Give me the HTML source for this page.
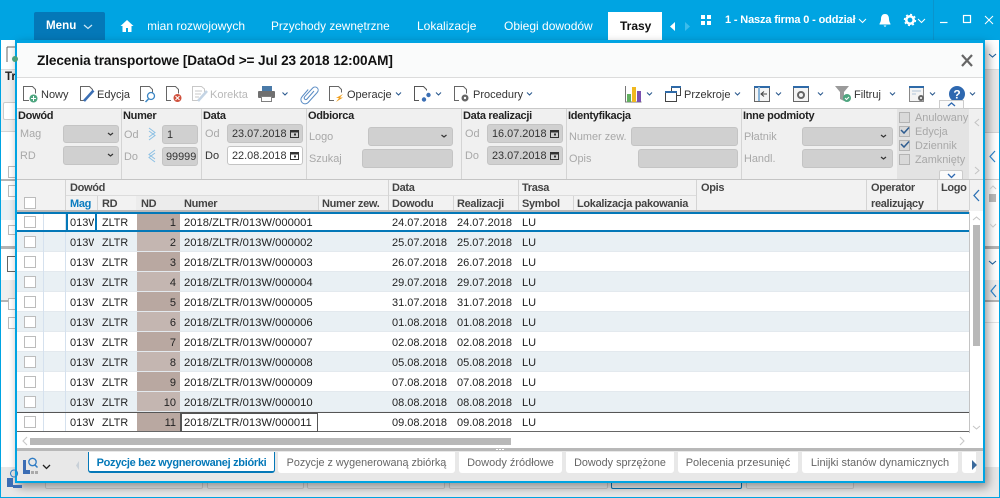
<!DOCTYPE html>
<html><head><meta charset="utf-8">
<style>
html,body{margin:0;padding:0;width:1000px;height:498px;overflow:hidden;background:#fff}
body{position:relative;font-family:"Liberation Sans",sans-serif;font-size:11px;color:#222}
div,span.t{position:absolute;white-space:nowrap;box-sizing:border-box}
.r{left:17px;width:952px;height:20px;background:#fff;border-bottom:1px solid #e3e9ee}
.r.a{background:#e9f0f4}
.r div{top:4px;line-height:14px;color:#222;font-size:11px}
.r .cb{left:7px;top:4px;width:12px;height:12px;border:1px solid #bcbcbc;background:#fff}
.r .v1{left:26px;top:0;width:1px;height:20px;background:#d5e1ee}
.r .v2{left:48px;top:0;width:1px;height:20px;background:#d5e1ee}
.r .m{left:53px;width:24px;overflow:hidden}
.r .d{left:85px;font-size:10.8px}
.r .n{left:120px;top:0;width:43px;height:19px;background:#b9a8a1;text-align:right;padding:4px 4px 0 0}
.r.a .n{background:#c4b6b1}
.r .u{left:167px;font-size:11.25px}.r .x{left:375px}.r .y{left:440px}.r .s{left:505px}
.lb{font-weight:bold;color:#222;top:109px;line-height:14px;font-size:11px;letter-spacing:-.3px}
.g{color:#a8a8a8;line-height:14px;font-size:10.9px}
.f{background:#d0d0d0;border:1px solid #c4c4c4;border-radius:3px;height:19px}
.dt{line-height:18px;padding-left:4px;font-size:10.9px;color:#333}
.hd{font-weight:bold;color:#444;line-height:14px;font-size:11px;letter-spacing:-.33px}
.vl{width:1px;background:#d4d4d4}
.tb{color:#333;line-height:14px;top:88px;font-size:11px}
.tab{top:452px;height:21px;background:#fff;border-radius:0 0 3px 3px;text-align:center;line-height:22px;color:#666;font-size:11px}
.top{color:#fff;line-height:16px;top:18px;font-size:12px}
.ck{left:899px;width:11px;height:11px;border:1px solid #b4b4b4;background:#d9d9d9}
.bb{top:478px;height:11px;background:#ececec;border:1px solid #ccc;border-radius:2px}
</style></head><body>

<!-- background app -->
<div style="left:0;top:0;width:1000px;height:40px;background:#00a4e2"></div>
<div style="left:0;top:40px;width:1px;height:458px;background:#00a4e2"></div>
<div style="left:999px;top:40px;width:1px;height:458px;background:#00a4e2"></div>
<div style="left:0;top:497px;width:1000px;height:1px;background:#00a4e2"></div>
<div style="left:933px;top:0;width:1px;height:40px;background:#0a94cc"></div>
<div style="left:34px;top:12px;width:71px;height:28px;background:#0478b8;border-radius:2px 2px 0 0"></div>
<div class="top" style="left:46px;font-weight:bold;font-size:11.6px">Menu</div>
<div class="top" style="left:148px;width:100px;overflow:hidden"><span style="margin-left:-1px">mian rozwojowych</span></div>
<div class="top" style="left:271px;font-size:11.8px">Przychody zewnętrzne</div>
<div class="top" style="left:417px">Lokalizacje</div>
<div class="top" style="left:504px">Obiegi dowodów</div>
<div style="left:608px;top:12px;width:54px;height:28px;background:#fff"></div>
<div class="top" style="left:620px;color:#111;font-weight:bold">Trasy</div>
<div class="top" style="left:725px;top:12px;font-weight:bold;font-size:11px;letter-spacing:-.15px">1 - Nasza firma 0 - oddział</div>

<!-- left strip behind -->
<div style="left:1px;top:69px;width:14px;height:63px;background:#f0f0f0;border-top:1px solid #ddd;border-bottom:1px solid #d4d4d4"></div>
<div style="left:5px;top:70px;font-weight:bold;font-size:11.5px;line-height:14px;color:#222">Tr</div>
<div style="left:3px;top:102px;width:14px;height:18px;background:#fff;border:1px solid #ccc;border-radius:2px"></div>
<div style="left:8px;top:166px;width:9px;height:12px;border:1px solid #bbb;background:#fff"></div>
<div style="left:1px;top:179px;width:14px;height:2px;background:#b4b4b4"></div>
<div style="left:8px;top:185px;width:9px;height:12px;border:1px solid #bbb;background:#fff"></div>
<div style="left:1px;top:200px;width:14px;height:20px;background:#e9f0f4"></div>
<div style="left:8px;top:225px;width:9px;height:10px;border:1px solid #bbb;background:#fff"></div>
<div style="left:1px;top:246px;width:14px;height:3px;background:#b4b4b4"></div>
<div style="left:7px;top:256px;width:10px;height:16px;border:1px solid #666;background:#fff"></div>
<div style="left:1px;top:280px;width:14px;height:22px;background:#efefef;border-bottom:2px solid #b4b4b4"></div>
<div style="left:8px;top:298px;width:9px;height:12px;border:1px solid #bbb;background:#fff"></div>
<div style="left:8px;top:317px;width:9px;height:12px;border:1px solid #bbb;background:#fff"></div>
<div style="left:1px;top:467px;width:998px;height:30px;background:#e8e8e8"></div>
<div class="bb" style="left:45px;width:158px"></div>
<div class="bb" style="left:207px;width:97px"></div>
<div class="bb" style="left:307px;width:138px"></div>
<div class="bb" style="left:449px;width:159px"></div>
<div class="bb" style="left:611px;width:131px;border-color:#0478b8"></div>
<div class="bb" style="left:746px;width:108px"></div>

<!-- right strip behind -->
<div style="left:985px;top:69px;width:14px;height:63px;background:#e8e8e8;border-top:1px solid #ddd"></div>
<div style="left:985px;top:132px;width:14px;height:48px;background:#fff;border-top:1px solid #d4d4d4;border-bottom:1px solid #ccc"></div>
<div style="left:989px;top:194px;width:7px;height:8px;background:#bbb"></div>
<div style="left:985px;top:246px;width:14px;height:3px;background:#b4b4b4"></div>
<div style="left:985px;top:280px;width:14px;height:22px;background:#efefef;border-bottom:2px solid #b4b4b4"></div>
<div style="left:985px;top:322px;width:14px;height:1px;background:#e4e4e4"></div>

<!-- dialog -->
<div style="left:15px;top:40px;width:970px;height:443px;background:#fff;border:solid #00a4e2;border-width:3px 2px 2px 2px;box-shadow:3px 4px 9px rgba(0,0,0,.4)"></div>
<div style="left:17px;top:43px;width:966px;height:35px;background:#fafbfb;border-bottom:1px solid #dcdcdc"></div>
<div style="left:37px;top:52px;font-size:13.6px;font-weight:bold;color:#111;line-height:18px;letter-spacing:-.1px">Zlecenia transportowe [DataOd &gt;= Jul 23 2018 12:00AM]</div>

<!-- toolbar text -->
<div class="tb" style="left:41px">Nowy</div>
<div class="tb" style="left:97px">Edycja</div>
<div class="tb" style="left:210px;color:#b8b8b8">Korekta</div>
<div class="tb" style="left:347px">Operacje</div>
<div class="tb" style="left:473px">Procedury</div>
<div class="tb" style="left:684px">Przekroje</div>
<div class="tb" style="left:854px">Filtruj</div>

<!-- filter panel -->
<div style="left:17px;top:108px;width:966px;height:71px;background:#f0f0f0;border-top:1px solid #c8c8c8"></div>
<div style="left:897px;top:109px;width:72px;height:70px;background:#e3e3e3"></div>
<div class="vl" style="left:121px;top:109px;height:70px"></div>
<div class="vl" style="left:201px;top:109px;height:70px"></div>
<div class="vl" style="left:306px;top:109px;height:70px"></div>
<div class="vl" style="left:461px;top:109px;height:70px"></div>
<div class="vl" style="left:566px;top:109px;height:70px"></div>
<div class="vl" style="left:741px;top:109px;height:70px"></div>
<div class="lb" style="left:18px">Dowód</div>
<div class="lb" style="left:123px">Numer</div>
<div class="lb" style="left:203px">Data</div>
<div class="lb" style="left:308px">Odbiorca</div>
<div class="lb" style="left:463px">Data realizacji</div>
<div class="lb" style="left:568px">Identyfikacja</div>
<div class="lb" style="left:743px">Inne podmioty</div>

<div class="g" style="left:20px;top:127px">Mag</div>
<div class="g" style="left:20px;top:149px">RD</div>
<div class="f" style="left:63px;top:125px;width:56px;height:18px"></div>
<div class="f" style="left:63px;top:146px;width:56px;height:19px"></div>
<div class="g" style="left:124px;top:128px">Od</div>
<div class="g" style="left:124px;top:150px">Do</div>
<div class="f dt" style="left:162px;top:125px;width:36px">1</div>
<div class="f dt" style="left:162px;top:147px;width:36px;padding-left:3px">99999</div>
<div class="g" style="left:205px;top:127px">Od</div>
<div style="left:205px;top:149px;line-height:14px;color:#333">Do</div>
<div class="f dt" style="left:227px;top:124px;width:76px">23.07.2018</div>
<div class="f dt" style="left:227px;top:146px;width:76px;background:#fff">22.08.2018</div>
<div class="g" style="left:309px;top:130px">Logo</div>
<div class="g" style="left:309px;top:152px">Szukaj</div>
<div class="f" style="left:368px;top:127px;width:85px"></div>
<div class="f" style="left:362px;top:149px;width:91px"></div>
<div class="g" style="left:465px;top:127px">Od</div>
<div class="g" style="left:465px;top:149px">Do</div>
<div class="f dt" style="left:487px;top:124px;width:76px">16.07.2018</div>
<div class="f dt" style="left:487px;top:146px;width:76px">23.07.2018</div>
<div class="g" style="left:569px;top:130px">Numer zew.</div>
<div class="g" style="left:569px;top:152px">Opis</div>
<div class="f" style="left:631px;top:127px;width:107px"></div>
<div class="f" style="left:638px;top:149px;width:100px"></div>
<div class="g" style="left:744px;top:130px">Płatnik</div>
<div class="g" style="left:744px;top:152px">Handl.</div>
<div class="f" style="left:802px;top:127px;width:91px"></div>
<div class="f" style="left:802px;top:149px;width:91px"></div>
<div class="ck" style="top:112px"></div>
<div class="ck" style="top:126px"></div>
<div class="ck" style="top:140px"></div>
<div class="ck" style="top:154px"></div>
<div class="g" style="left:915px;top:111px;width:54px;overflow:hidden">Anulowany</div>
<div class="g" style="left:915px;top:125px">Edycja</div>
<div class="g" style="left:915px;top:139px">Dziennik</div>
<div class="g" style="left:915px;top:153px;width:54px;overflow:hidden">Zamknięty</div>
<div style="left:939px;top:170px;width:24px;height:9px;background:#fafafa;border:1px solid #ccc;border-bottom:0;border-radius:2px 2px 0 0"></div>

<!-- grid header -->
<div style="left:17px;top:179px;width:966px;height:32px;background:#f2f2f2;border-top:1px solid #c4c4c4"></div>
<div style="left:65px;top:195px;width:631px;height:1px;background:#dcdcdc"></div>
<div style="left:17px;top:210px;width:952px;height:2px;background:#b8b8b8"></div>
<div class="vl" style="left:65px;top:180px;height:30px"></div>
<div class="vl" style="left:97px;top:196px;height:14px"></div>
<div class="vl" style="left:136px;top:196px;height:14px"></div>
<div class="vl" style="left:180px;top:196px;height:14px"></div>
<div class="vl" style="left:318px;top:196px;height:14px"></div>
<div class="vl" style="left:388px;top:180px;height:30px"></div>
<div class="vl" style="left:453px;top:196px;height:14px"></div>
<div class="vl" style="left:518px;top:180px;height:30px"></div>
<div class="vl" style="left:573px;top:196px;height:14px"></div>
<div class="vl" style="left:696px;top:180px;height:30px"></div>
<div class="vl" style="left:866px;top:180px;height:30px"></div>
<div class="vl" style="left:937px;top:180px;height:30px"></div>
<div class="vl" style="left:969px;top:180px;height:30px"></div>
<div style="left:24px;top:197px;width:12px;height:12px;border:1px solid #bcbcbc;background:#fff"></div>
<div style="left:136px;top:196px;width:44px;height:14px;background:#ececec"></div>
<div style="left:180px;top:196px;width:138px;height:14px;background:#ececec"></div>
<div class="hd" style="left:70px;top:181px">Dowód</div>
<div class="hd" style="left:392px;top:181px">Data</div>
<div class="hd" style="left:522px;top:181px">Trasa</div>
<div class="hd" style="left:701px;top:181px">Opis</div>
<div class="hd" style="left:871px;top:181px">Operator</div>
<div class="hd" style="left:941px;top:181px">Logo</div>
<div class="hd" style="left:70px;top:197px;color:#0a7cc0">Mag</div>
<div class="hd" style="left:102px;top:197px">RD</div>
<div class="hd" style="left:141px;top:197px">ND</div>
<div class="hd" style="left:184px;top:197px">Numer</div>
<div class="hd" style="left:322px;top:197px">Numer zew.</div>
<div class="hd" style="left:392px;top:197px">Dowodu</div>
<div class="hd" style="left:457px;top:197px">Realizacji</div>
<div class="hd" style="left:522px;top:197px">Symbol</div>
<div class="hd" style="left:577px;top:197px">Lokalizacja pakowania</div>
<div class="hd" style="left:871px;top:197px">realizujący</div>

<!-- rows -->
<div class="r" style="top:212px"><div class="cb"></div><div class="v1"></div><div class="v2"></div><div class="m">013W</div><div class="d">ZLTR</div><div class="n">1</div><div class="u">2018/ZLTR/013W/000001</div><div class="x">24.07.2018</div><div class="y">24.07.2018</div><div class="s">LU</div></div>
<div class="r a" style="top:232px"><div class="cb"></div><div class="v1"></div><div class="v2"></div><div class="m">013W</div><div class="d">ZLTR</div><div class="n">2</div><div class="u">2018/ZLTR/013W/000002</div><div class="x">25.07.2018</div><div class="y">25.07.2018</div><div class="s">LU</div></div>
<div class="r" style="top:252px"><div class="cb"></div><div class="v1"></div><div class="v2"></div><div class="m">013W</div><div class="d">ZLTR</div><div class="n">3</div><div class="u">2018/ZLTR/013W/000003</div><div class="x">26.07.2018</div><div class="y">26.07.2018</div><div class="s">LU</div></div>
<div class="r a" style="top:272px"><div class="cb"></div><div class="v1"></div><div class="v2"></div><div class="m">013W</div><div class="d">ZLTR</div><div class="n">4</div><div class="u">2018/ZLTR/013W/000004</div><div class="x">29.07.2018</div><div class="y">29.07.2018</div><div class="s">LU</div></div>
<div class="r" style="top:292px"><div class="cb"></div><div class="v1"></div><div class="v2"></div><div class="m">013W</div><div class="d">ZLTR</div><div class="n">5</div><div class="u">2018/ZLTR/013W/000005</div><div class="x">31.07.2018</div><div class="y">31.07.2018</div><div class="s">LU</div></div>
<div class="r a" style="top:312px"><div class="cb"></div><div class="v1"></div><div class="v2"></div><div class="m">013W</div><div class="d">ZLTR</div><div class="n">6</div><div class="u">2018/ZLTR/013W/000006</div><div class="x">01.08.2018</div><div class="y">01.08.2018</div><div class="s">LU</div></div>
<div class="r" style="top:332px"><div class="cb"></div><div class="v1"></div><div class="v2"></div><div class="m">013W</div><div class="d">ZLTR</div><div class="n">7</div><div class="u">2018/ZLTR/013W/000007</div><div class="x">02.08.2018</div><div class="y">02.08.2018</div><div class="s">LU</div></div>
<div class="r a" style="top:352px"><div class="cb"></div><div class="v1"></div><div class="v2"></div><div class="m">013W</div><div class="d">ZLTR</div><div class="n">8</div><div class="u">2018/ZLTR/013W/000008</div><div class="x">05.08.2018</div><div class="y">05.08.2018</div><div class="s">LU</div></div>
<div class="r" style="top:372px"><div class="cb"></div><div class="v1"></div><div class="v2"></div><div class="m">013W</div><div class="d">ZLTR</div><div class="n">9</div><div class="u">2018/ZLTR/013W/000009</div><div class="x">07.08.2018</div><div class="y">07.08.2018</div><div class="s">LU</div></div>
<div class="r a" style="top:392px"><div class="cb"></div><div class="v1"></div><div class="v2"></div><div class="m">013W</div><div class="d">ZLTR</div><div class="n">10</div><div class="u">2018/ZLTR/013W/000010</div><div class="x">08.08.2018</div><div class="y">08.08.2018</div><div class="s">LU</div></div>
<div class="r" style="top:412px"><div class="cb"></div><div class="v1"></div><div class="v2"></div><div class="m">013W</div><div class="d">ZLTR</div><div class="n">11</div><div class="u">2018/ZLTR/013W/000011</div><div class="x">09.08.2018</div><div class="y">09.08.2018</div><div class="s">LU</div></div>

<!-- selection outlines -->
<div style="left:17px;top:212px;width:953px;height:2px;background:#0478b8"></div>
<div style="left:17px;top:230px;width:953px;height:2px;background:#0478b8"></div>
<div style="left:66px;top:212px;width:31px;height:20px;border:2.500px solid #0478b8"></div>
<div style="left:17px;top:412px;width:952px;height:1px;background:#555"></div>
<div style="left:17px;top:431px;width:952px;height:1px;background:#666"></div>
<div style="left:180px;top:412px;width:138px;height:20px;border:1px solid #555;border-width:2px 1px 1px 2px"></div>
<div style="left:969px;top:212px;width:1px;height:221px;background:#c4c4c4"></div>
<div style="left:973px;top:225px;width:7px;height:121px;background:#b8b8b8"></div>
<div style="left:30px;top:438px;width:481px;height:7px;background:#b8b8b8"></div>

<!-- tab bar -->
<div style="left:17px;top:448px;width:966px;height:33px;background:#e8e8e8;border-top:3px solid #b8b8b8"></div>
<div class="tab" style="left:88px;width:187px;color:#0478b8;font-weight:bold;letter-spacing:-.31px;border:solid #0478b8;border-width:0 1px 2px 1px">Pozycje bez wygnerowanej zbiórki</div>
<div class="tab" style="left:278px;width:177px;font-size:10.8px">Pozycje z wygenerowaną zbiórką</div>
<div class="tab" style="left:459px;width:103px">Dowody źródłowe</div>
<div class="tab" style="left:566px;width:108px;font-size:10.8px">Dowody sprzężone</div>
<div class="tab" style="left:678px;width:120px">Polecenia przesunięć</div>
<div class="tab" style="left:802px;width:156px">Linijki stanów dynamicznych</div>
<div class="tab" style="left:962px;width:14px"></div>

<!-- icons -->
<svg width="1000" height="498" viewBox="0 0 1000 498" style="position:absolute;left:0;top:0" fill="none">
<path d="M84 25l4 3.500 4-3.500" stroke="#cfe8f5" stroke-width="1.200"/>
<path d="M127 20l-6.500 6h2v6h3.500v-4h2v4h3.500v-6h2z" fill="#fff"/>
<path d="M675 22v9l-5-4.500z" fill="#fff"/><path d="M685 22v9l5-4.500z" fill="#3dbcec"/>
<g fill="#fff"><rect x="701" y="15" width="4" height="4"/><rect x="707" y="15" width="4" height="4"/><rect x="701" y="21" width="4" height="4"/><rect x="707" y="21" width="4" height="4"/></g>
<path d="M859 19l3.500 3.500 3.500-3.500M918 19l3.500 3.500 3.500-3.500" stroke="#fff"/>
<path d="M885 14c-3 0-4 2.500-4 5 0 3-1.500 4-1.500 5.500h11c0-1.500-1.500-2.500-1.500-5.500 0-2.500-1-5-4-5zM883.500 25.500h3l-1.500 1.500z" fill="#fff"/>
<circle cx="910" cy="20" r="3.700" stroke="#fff" stroke-width="2.600"/><circle cx="910" cy="20" r="5.500" stroke="#fff" stroke-width="1.400" stroke-dasharray="2 2.300"/>
<path d="M940 22.500h7.500" stroke="#fff" stroke-width="1.200"/><rect x="963.500" y="15.500" width="7" height="7" stroke="#fff" stroke-width="1.200"/><path d="M985 16l8 8M993 16l-8 8" stroke="#fff"/>

<!-- dialog close -->
<path d="M962 55l10 11M972 55l-10 11" stroke="#666" stroke-width="2.200"/>

<!-- behind icons -->
<path d="M7 47h8M7 47v15" stroke="#666"/><circle cx="15" cy="59" r="3" fill="#4aa07a"/>
<path d="M989 54l3.500 3 3.500-3M989 261l3.500 3 3.500-3" stroke="#1e5c96" stroke-width="1.100"/>
<path d="M995 151l-5 5.500 5 5.500M996 285l-5 6 5 6" stroke="#2a7cc0" stroke-width="1.200"/>
<path d="M990 189l3-3 3 3M990 224l3 3 3-3" stroke="#c4c4c4"/>
<path d="M14 470a3.500 3.500 0 1 0 .1 0" stroke="#2f7cc4"/>
<rect x="7" y="478" width="6" height="9" fill="#3b6db4"/><rect x="13" y="485" width="9" height="3" fill="#3b6db4"/>

<!-- toolbar: Nowy -->
<path d="M29 100.500h-5.500V86.500h9l3 3v4" stroke="#666"/><circle cx="33.500" cy="98.500" r="4" fill="#4da57f"/><path d="M31 98.500h5M33.500 96v5" stroke="#fff"/>
<!-- Edycja -->
<path d="M85 100.500h-4.500V86.500h9l3 3v1" stroke="#666"/><path d="M84 101l9.500-10.500" stroke="#3b6fb4" stroke-width="2.600"/>
<!-- search -->
<path d="M144 100.500h-3.500V86.500h9l3 3v3" stroke="#666"/><circle cx="151" cy="96" r="3.500" stroke="#3b86c4" stroke-width="1.300"/><path d="M148.500 99l-3 3" stroke="#3b86c4" stroke-width="1.500"/>
<!-- delete -->
<path d="M171 100.500h-4.500V86.500h9l3 3v4" stroke="#666"/><circle cx="177.500" cy="98" r="4" fill="#d0503c"/><path d="M175.500 96l4 4M179.500 96l-4 4" stroke="#fff"/>
<!-- korekta -->
<path d="M198 100.500h-5.500V86.500h9l3 2.500v3M195 91h7M195 94h6M195 97h4" stroke="#c8c8c8"/><path d="M198 101l9-10" stroke="#c4d4e4" stroke-width="2.600"/>
<!-- printer -->
<rect x="262" y="86" width="10" height="5" fill="#4a7aa8"/><rect x="258" y="91" width="17" height="7" rx="1" fill="#707070"/><rect x="261.500" y="96.500" width="10" height="5" fill="#fff" stroke="#808080"/>
<path d="M282.500 92.500l2.500 2.500 2.500-2.500M396 92.500l2.500 2.500 2.500-2.500M436 92.500l2.500 2.500 2.500-2.500M527 92.500l2.500 2.500 2.500-2.500M647 92.500l2.500 2.500 2.500-2.500M735 92.500l2.500 2.500 2.500-2.500M776 92.500l2.500 2.500 2.500-2.500M818 92.500l2.500 2.500 2.500-2.500M890 92.500l2.500 2.500 2.500-2.500M930 92.500l2.500 2.500 2.500-2.500M970 92.500l2.500 2.500 2.500-2.500" stroke="#2e5c90" stroke-width="1.100"/>
<!-- clip -->
<path d="M314 91l-7 8c-1.500 1.800-3.800-.5-2.300-2.300l8-8.700c3-3 7.500 1 4.500 4.500l-9 10c-4 4-10-1.500-6-6l6-7" stroke="#5a8cc4" stroke-width="1"/>
<!-- operacje -->
<path d="M334 100.500h-4.500V86.500h9l3 3v3" stroke="#666"/><path d="M343 94l-7 4h3l-3 4 7-4.500h-3z" fill="#f0a020"/>
<!-- steps -->
<path d="M419 100.500h-4.500V86.500h9l3 3v1" stroke="#555"/><circle cx="424" cy="99.500" r="2.200" fill="#3b6fb4"/><circle cx="428.500" cy="95" r="2.200" fill="#3b6fb4"/>
<!-- procedury -->
<path d="M459 100.500h-4.500V86.500h9l3 3v4" stroke="#666"/><circle cx="465" cy="98" r="3.500" fill="#666"/><circle cx="465" cy="98" r="1.200" fill="#fff"/>
<!-- chart -->
<path d="M625.500 86v16h16" stroke="#777"/><rect x="627" y="94" width="4" height="8" fill="#62b060"/><rect x="632" y="87" width="4" height="15" fill="#f0b820"/><rect x="637" y="91" width="4" height="11" fill="#7a50b0"/>
<!-- przekroje -->
<rect x="671.500" y="86.500" width="9" height="9" stroke="#444"/><path d="M671 87h10" stroke="#2e6aa8" stroke-width="2"/><rect x="665.500" y="91.500" width="11" height="10" fill="#fff" stroke="#444"/><path d="M665 92h12" stroke="#2e6aa8" stroke-width="2"/>
<!-- panel -->
<rect x="754.500" y="86.500" width="15" height="15" fill="#f4f4f4" stroke="#666"/><path d="M754 87h16" stroke="#2e6aa8" stroke-width="2"/><path d="M759 87v14" stroke="#8ab4d8" stroke-width="2"/><path d="M767 94h-5M764 91.500l-3 2.500 3 2.500" stroke="#444"/>
<rect x="793.500" y="86.500" width="15" height="15" fill="#f4f4f4" stroke="#666"/><path d="M793 87h16" stroke="#2e6aa8" stroke-width="2"/><circle cx="801" cy="95" r="3" stroke="#666" stroke-width="2"/>
<!-- filter -->
<path d="M835 86h14l-5 6v9l-4-2v-7z" fill="#9a9a9a"/><circle cx="847" cy="98" r="4" fill="#4da57f"/><path d="M845 98l1.500 1.500 2.500-2.500" stroke="#fff"/>
<!-- settings window -->
<rect x="909.500" y="86.500" width="14" height="15" fill="#f4f4f4" stroke="#888"/><path d="M909 87h15" stroke="#2e6aa8" stroke-width="2"/><path d="M912 91h9M912 94h4" stroke="#b0c4d8"/><circle cx="921" cy="98" r="3" fill="#666"/><circle cx="921" cy="98" r="1" fill="#fff"/>
<!-- help -->
<circle cx="957" cy="94" r="8" fill="#2e68b0"/>
<text x="957" y="98.500" text-anchor="middle" font-family="Liberation Sans" font-size="12" font-weight="bold" fill="#fff">?</text>

<!-- filter details -->
<rect x="939.500" y="100.500" width="24" height="8" fill="#fafafa" stroke="#ccc"/>
<path d="M948 106l3.500-3 3.500 3M948 174l3.500 3.500 3.500-3.500" stroke="#2e68b0" stroke-width="1.300"/>
<path d="M108 133l2.500 2 2.500-2M108 154l2.500 2 2.500-2M441.500 135l2.500 2 2.500-2M881 135l2.500 2 2.500-2M881 157l2.500 2 2.500-2" stroke="#333" stroke-width="1.200"/>
<path d="M149 128l6 4.500-6 4.500M149 131l6 4.500-6 4.500M155 150l-6 4.500 6 4.500M155 153l-6 4.500 6 4.500" stroke="#8cc0e4"/>
<g stroke="#333"><rect x="290.500" y="130.500" width="8" height="7"/><path d="M290 131.500h9" stroke-width="2"/><path d="M294 134.500h2" stroke-width="2"/><rect x="290.500" y="152.500" width="8" height="7"/><path d="M290 153.500h9" stroke-width="2"/><path d="M294 156.500h2" stroke-width="2"/><rect x="550.500" y="130.500" width="8" height="7"/><path d="M550 131.500h9" stroke-width="2"/><path d="M554 134.500h2" stroke-width="2"/><rect x="550.500" y="152.500" width="8" height="7"/><path d="M550 153.500h9" stroke-width="2"/><path d="M554 156.500h2" stroke-width="2"/></g>
<path d="M901 130l3 3 5-5.500M901 144l3 3 5-5.500" stroke="#2e5c90" stroke-width="1.500"/>
<path d="M979 119l-4 3.500 4 3.500M975 167l4 3.500-4 3.500" stroke="#c4c4c4"/>
<path d="M979 190l-5 5.500 5 5.500" stroke="#2a70b4" stroke-width="1.300"/>
<path d="M973 220l3.500-3 3.500 3M973 426l3.500 3 3.500-3" stroke="#c4c4c4"/>
<path d="M27 437l-4 4 4 4M960 437l4 4-4 4" stroke="#c8c8c8" stroke-width="1.100"/>
<!-- tab bar icons -->
<path d="M972 460l5 5-5 5z" fill="#3b6a9c"/>
<path d="M79 461v9l-3-4.500z" fill="#c8d0d8"/>
<circle cx="32.500" cy="462" r="3.700" stroke="#2f7cc4" stroke-width="1.300"/><path d="M35 465l2.500 2.500" stroke="#2f7cc4" stroke-width="1.500"/>
<rect x="23" y="460" width="3" height="14" fill="#3b6db4"/><rect x="23" y="470" width="7" height="4" fill="#3b6db4"/><rect x="31" y="471" width="3" height="3" fill="#aaa"/><rect x="35" y="471" width="3" height="3" fill="#aaa"/>
<path d="M43 465l3.500 3.500 3.500-3.500" stroke="#222" stroke-width="1.300"/>
<path d="M496 449.500h8" stroke="#fff" stroke-dasharray="2 1" stroke-width="1"/>
</svg>
</body></html>
